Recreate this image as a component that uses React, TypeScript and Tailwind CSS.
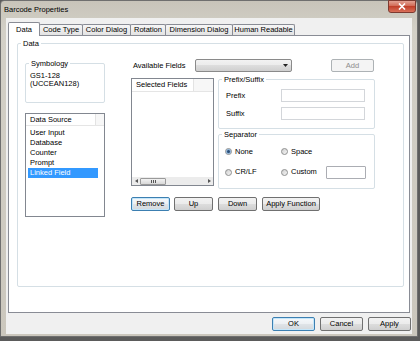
import React from "react";

const btn =
  "h-[14px] flex items-center justify-center rounded-[2px] border border-[#707070] bg-[linear-gradient(#f2f2f2,#ebebeb_50%,#dddddd_50%,#cfcfcf)] text-black leading-none";
const btnDefault =
  "h-[14px] flex items-center justify-center rounded-[2px] border border-[#3c7fb1] shadow-[inset_0_0_0_1px_#c4e6fa] bg-[linear-gradient(#f5f9fc,#eceff2_50%,#e0e4e8_50%,#d3d8dc)] text-black leading-none";

function Radio({ checked }: { checked?: boolean }) {
  return (
    <div className="w-[7px] h-[7px] rounded-full border border-[#8e8f8f] bg-[linear-gradient(135deg,#cfcfcf,#f6f6f6)] flex items-center justify-center shrink-0">
      {checked && <div className="w-[3px] h-[3px] rounded-full bg-[#2a4f78] shadow-[0_0_0_1px_#8fb3d6]" />}
    </div>
  );
}

export default function App() {
  return (
    <div
      className="w-[420px] h-[341px] bg-[#5b5b5b] overflow-hidden text-[7.5px] text-black"
      style={{ fontFamily: '"Liberation Sans", Arial, sans-serif' }}
    >
      <div className="w-[418px] h-[337px] border border-[#6f6f6f] rounded-t-[4px] bg-[linear-gradient(#c8c4ba,#d3d0c7_30px,#cbc7bd)] flex flex-col">
        {/* Title bar */}
        <div className="h-[17px] flex items-start justify-between">
          <span className="pl-[3px] pt-[4px] leading-[9px] text-[7.5px] text-black">Barcode Properties</span>
          <div className="-mt-px mr-[1px] w-[28px] h-[13px] rounded-b-[3px] border border-[#7d3a30] bg-[linear-gradient(#e2a293,#d0644f_50%,#c1402a_50%,#d9705a)] flex items-center justify-center">
            <svg width="8" height="7" viewBox="0 0 8 7">
              <path d="M1 0.5 L7 6.5 M7 0.5 L1 6.5" stroke="#ffffff" strokeWidth="1.6" />
            </svg>
          </div>
        </div>

        {/* Client area */}
        <div className="mx-[5px] h-[316px] bg-[#f0f0f0] flex flex-col pt-[4px]">
          {/* Tabs */}
          <div className="h-[13px] flex items-end ml-[2px]">
            <div className="relative z-10 w-[32px] h-[14px] -mb-px border border-b-0 border-[#898c95] bg-white rounded-t-[2px] flex items-start justify-center pt-[2px] leading-[9px]">
              Data
            </div>
            <div className="-ml-px w-[44px] h-[11px] border border-b-0 border-[#898c95] bg-[linear-gradient(#f6f6f6,#e3e3e3)] rounded-t-[2px] flex items-center justify-center leading-none">
              Code Type
            </div>
            <div className="-ml-px w-[49px] h-[11px] border border-b-0 border-[#898c95] bg-[linear-gradient(#f6f6f6,#e3e3e3)] rounded-t-[2px] flex items-center justify-center leading-none">
              Color Dialog
            </div>
            <div className="-ml-px w-[36px] h-[11px] border border-b-0 border-[#898c95] bg-[linear-gradient(#f6f6f6,#e3e3e3)] rounded-t-[2px] flex items-center justify-center leading-none">
              Rotation
            </div>
            <div className="-ml-px w-[68px] h-[11px] border border-b-0 border-[#898c95] bg-[linear-gradient(#f6f6f6,#e3e3e3)] rounded-t-[2px] flex items-center justify-center leading-none">
              Dimension Dialog
            </div>
            <div className="-ml-px w-[63px] h-[11px] border border-b-0 border-[#898c95] bg-[linear-gradient(#f6f6f6,#e3e3e3)] rounded-t-[2px] flex items-center justify-center leading-none">
              Human Readable
            </div>
          </div>

          {/* Panel */}
          <div className="mx-[2px] h-[278px] border border-[#898c95] bg-white pt-[7px] pl-[8px]">
            {/* Group: Data */}
            <div className="relative w-[387px] h-[244px] border border-[#d5dfe5] rounded-[2px]">
              <span className="absolute left-[3px] -top-[5px] px-[2px] bg-white leading-[9px]">Data</span>
              <div className="flex pt-[15px] pl-[7px]">
                {/* Left column */}
                <div className="w-[80px] mt-[4px] flex flex-col">
                  <div className="relative h-[40px] border border-[#d5dfe5] rounded-[2px] pl-[4px] pt-[8px]">
                    <span className="absolute left-[3px] -top-[5px] px-[2px] bg-white leading-[9px]">Symbology</span>
                    <div className="leading-[8px]">GS1-128</div>
                    <div className="leading-[8px]">(UCCEAN128)</div>
                  </div>
                  <div className="mt-[10px] h-[104px] border border-[#828790] bg-white flex flex-col">
                    <div className="h-[12px] flex items-stretch border-b border-[#e5e5e5]">
                      <div className="w-[70px] pl-[4px] flex items-center leading-none border-r border-[#e3e3e3]">Data Source</div>
                      <div className="flex-1 bg-[#f7f7f7]" />
                    </div>
                    <div className="mt-[2px] flex flex-col">
                      <div className="h-[10px] ml-[2px] pl-[2px] flex items-center leading-none">User Input</div>
                      <div className="h-[10px] ml-[2px] pl-[2px] flex items-center leading-none">Database</div>
                      <div className="h-[10px] ml-[2px] pl-[2px] flex items-center leading-none">Counter</div>
                      <div className="h-[10px] ml-[2px] pl-[2px] flex items-center leading-none">Prompt</div>
                      <div className="h-[10px] ml-[2px] w-[70px] pl-[2px] flex items-center leading-none bg-[#3399ff] text-white">Linked Field</div>
                    </div>
                  </div>
                </div>

                {/* Right column */}
                <div className="ml-[26px] flex flex-col">
                  {/* Row 1 */}
                  <div className="h-[13px] flex items-center">
                    <div className="w-[64px] pl-[2px] leading-none">Available Fields</div>
                    <div className="w-[97px] h-[13px] rounded-[2px] border border-[#8a8a8a] bg-[linear-gradient(#f2f2f2,#ebebeb_50%,#dddddd_50%,#cfcfcf)] flex items-center justify-end pr-[3px]">
                      <svg width="5" height="3" viewBox="0 0 5 3">
                        <path d="M0 0 H5 L2.5 3 Z" fill="#222" />
                      </svg>
                    </div>
                    <div className="ml-[39px] w-[43px] h-[13px] rounded-[2px] border border-[#adb2b5] bg-[#f4f4f4] text-[#8d8d8d] flex items-center justify-center leading-none">
                      Add
                    </div>
                  </div>

                  {/* Row 2 */}
                  <div className="mt-[6px] h-[111px] flex">
                    <div className="w-[83px] h-[108px] border border-[#828790] bg-white flex flex-col">
                      <div className="h-[13px] flex items-stretch border-b border-[#e5e5e5]">
                        <div className="w-[62px] pl-[4px] flex items-center leading-none border-r border-[#e3e3e3]">Selected Fields</div>
                        <div className="flex-1 bg-[#f7f7f7]" />
                      </div>
                      <div className="flex-1" />
                      <div className="h-[8px] bg-[#ececec] flex items-center">
                        <div className="w-[8px] flex items-center justify-center">
                          <svg width="3" height="4" viewBox="0 0 3 4">
                            <path d="M3 0 V4 L0 2 Z" fill="#555" />
                          </svg>
                        </div>
                        <div className="w-[26px] h-[7px] rounded-[1px] border border-[#9a9a9a] bg-[linear-gradient(#f3f3f3,#d8d8d8)] flex items-center justify-center">
                          <svg width="5" height="3" viewBox="0 0 5 3">
                            <path d="M0.5 0 V3 M2.5 0 V3 M4.5 0 V3" stroke="#555" strokeWidth="1" />
                          </svg>
                        </div>
                        <div className="flex-1" />
                        <div className="w-[8px] flex items-center justify-center">
                          <svg width="3" height="4" viewBox="0 0 3 4">
                            <path d="M0 0 V4 L3 2 Z" fill="#555" />
                          </svg>
                        </div>
                      </div>
                    </div>

                    <div className="ml-[4px] w-[157px] flex flex-col">
                      {/* Prefix/Suffix */}
                      <div className="relative mt-[1px] h-[50px] border border-[#d5dfe5] rounded-[2px] pt-[9px] pl-[7px]">
                        <span className="absolute left-[3px] -top-[5px] px-[2px] bg-white leading-[9px]">Prefix/Suffix</span>
                        <div className="h-[13px] flex items-center">
                          <div className="w-[55px] leading-none">Prefix</div>
                          <div className="w-[84px] h-[13px] border border-[#d3d6da] bg-white" />
                        </div>
                        <div className="mt-[5px] h-[13px] flex items-center">
                          <div className="w-[55px] leading-none">Suffix</div>
                          <div className="w-[84px] h-[13px] border border-[#d3d6da] bg-white" />
                        </div>
                      </div>
                      {/* Separator */}
                      <div className="relative mt-[5px] h-[56px] border border-[#d5dfe5] rounded-[2px] pt-[11px] pl-[6px]">
                        <span className="absolute left-[3px] -top-[5px] px-[2px] bg-white leading-[9px]">Separator</span>
                        <div className="h-[12px] flex items-center">
                          <div className="w-[56px] flex items-center">
                            <Radio checked />
                            <span className="ml-[3px] leading-none">None</span>
                          </div>
                          <div className="flex items-center">
                            <Radio />
                            <span className="ml-[3px] leading-none">Space</span>
                          </div>
                        </div>
                        <div className="mt-[8px] h-[13px] flex items-center">
                          <div className="w-[56px] flex items-center">
                            <Radio />
                            <span className="ml-[3px] leading-none">CR/LF</span>
                          </div>
                          <div className="w-[45px] flex items-center">
                            <Radio />
                            <span className="ml-[3px] leading-none">Custom</span>
                          </div>
                          <div className="w-[40px] h-[13px] rounded-[1px] border border-[#abadb3] bg-white" />
                        </div>
                      </div>
                    </div>
                  </div>

                  {/* Row 3 buttons */}
                  <div className="mt-[8px] flex">
                    <div className={btnDefault + " w-[39px]"}>Remove</div>
                    <div className={btn + " ml-[4px] w-[39px]"}>Up</div>
                    <div className={btn + " ml-[5px] w-[39px]"}>Down</div>
                    <div className={btn + " ml-[5px] w-[58px]"}>Apply Function</div>
                  </div>
                </div>
              </div>
            </div>
          </div>

          {/* Bottom buttons */}
          <div className="mt-[4px] flex justify-end mr-[1px]">
            <div className={btnDefault + " w-[43px]"}>OK</div>
            <div className={btn + " ml-[5px] w-[43px]"}>Cancel</div>
            <div className={btn + " ml-[5px] w-[43px]"}>Apply</div>
          </div>
        </div>
      </div>
    </div>
  );
}
